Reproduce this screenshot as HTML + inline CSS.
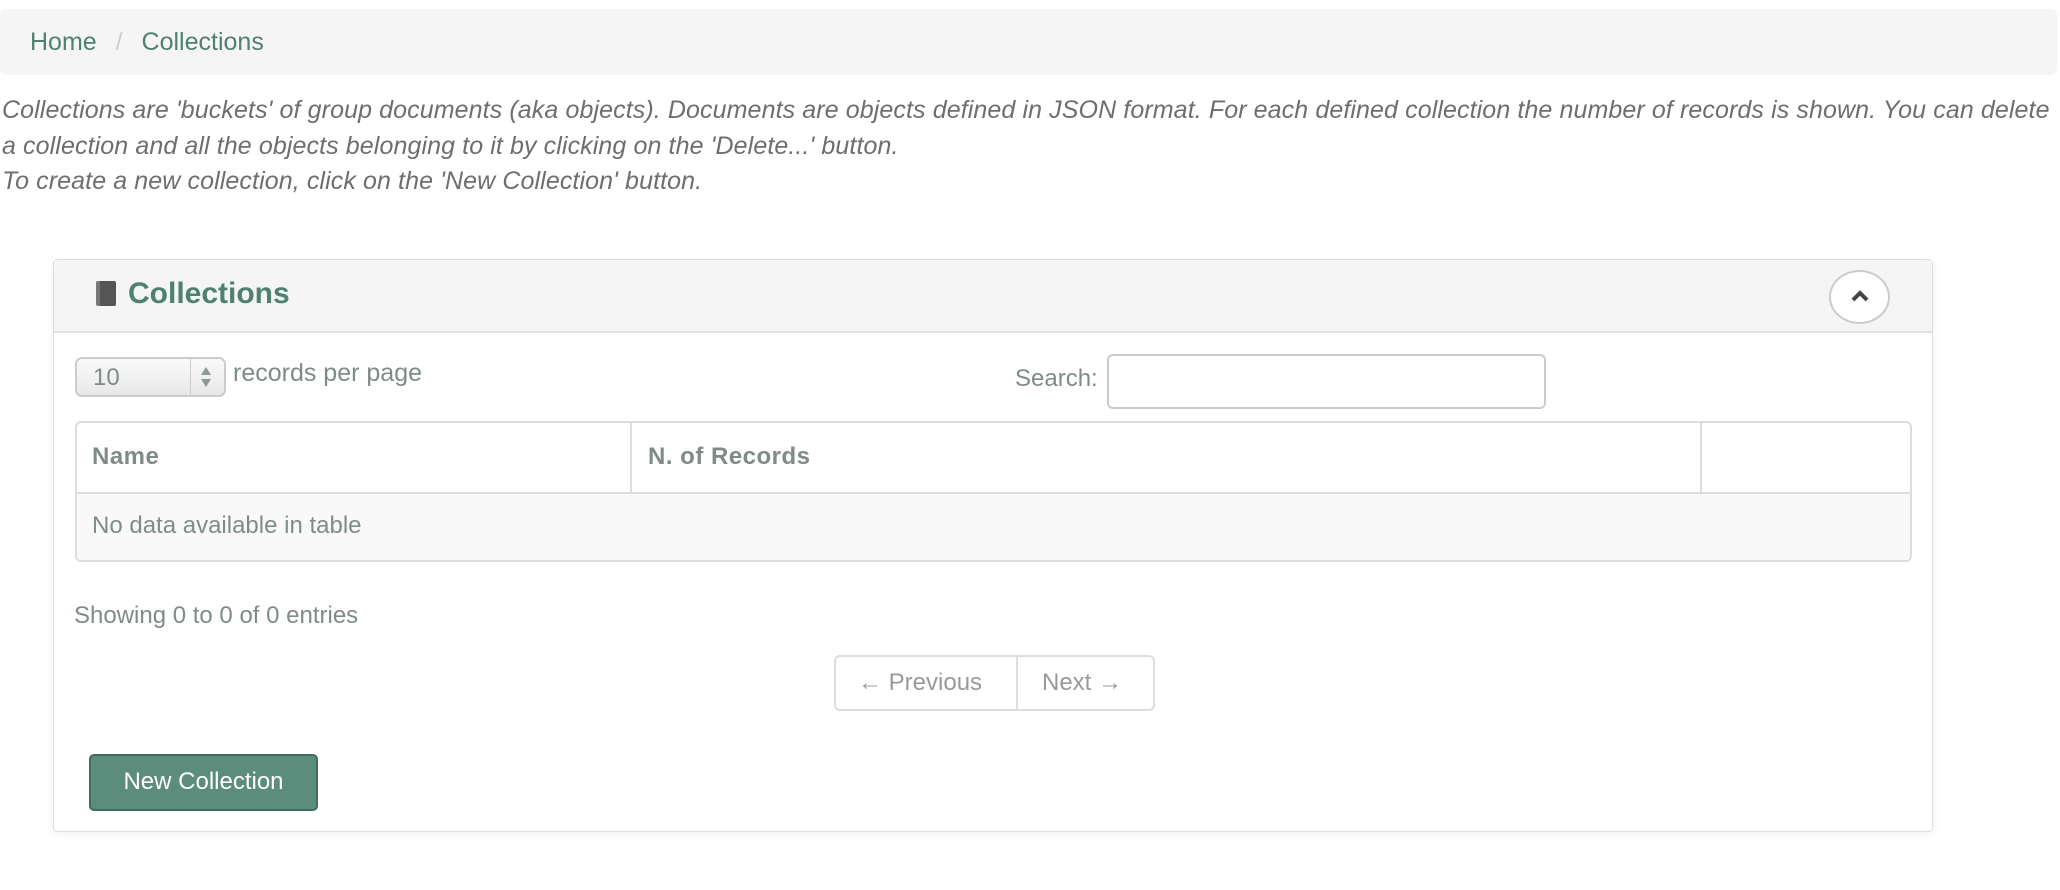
<!DOCTYPE html>
<html><head><meta charset="utf-8"><style>
*{box-sizing:border-box;margin:0;padding:0}
body{width:2060px;height:890px;background:#fff;font-family:"Liberation Sans",sans-serif;position:relative;overflow:hidden}
.a{position:absolute;white-space:nowrap}
.g{color:#4e8171}
.t{color:#7f8c86;font-size:24px}
</style></head><body>
<div class="a" style="left:0;top:9px;width:2057px;height:66px;background:#f5f5f5;border-radius:6px"></div>
<div class="a g" style="left:30px;top:28px;font-size:25px">Home <span style="color:#ccc;padding:0 12px">/</span> Collections</div>
<div class="a" style="left:2px;top:93px;font-size:25px;line-height:35.5px;font-style:italic;color:#6e6e6e;letter-spacing:0.1px">Collections are 'buckets' of group documents (aka objects). Documents are objects defined in JSON format. For each defined collection the number of records is shown. You can delete<br>a collection and all the objects belonging to it by clicking on the 'Delete...' button.<br>To create a new collection, click on the 'New Collection' button.</div>

<div class="a" style="left:53px;top:259px;width:1880px;height:573px;border:1px solid #ddd;border-radius:4px;box-shadow:0 2px 10px rgba(0,0,0,0.06)"></div>
<div class="a" style="left:54px;top:260px;width:1878px;height:73px;background:#f5f5f5;border-bottom:2px solid #e2e2e2"></div>
<div class="a" style="left:96px;top:281px;width:20px;height:25px;background:#555;border-radius:2px;border-left:4px solid #777"></div>
<div class="a g" style="left:128px;top:277px;font-size:30px;font-weight:bold">Collections</div>
<div class="a" style="left:1829px;top:270px;width:61px;height:54px;border:2px solid #ccc;border-radius:50%;background:#fff"></div>
<svg class="a" style="left:1850px;top:289px" width="20" height="14" viewBox="0 0 20 14"><path d="M3 11 L10 4 L17 11" fill="none" stroke="#444" stroke-width="4"/></svg>

<div class="a" style="left:75px;top:357px;width:151px;height:40px;border:2px solid #ccc;border-radius:7px;background:linear-gradient(#fafafa,#e8e8e8)"></div>
<div class="a" style="left:190px;top:359px;width:1px;height:36px;background:#ccc"></div>
<div class="a t" style="left:93px;top:364px">10</div>
<svg class="a" style="left:200px;top:366px" width="12" height="22"><path d="M6 1 L11 9 L1 9Z M6 21 L11 13 L1 13Z" fill="#8a9a92"/></svg>
<div class="a t" style="left:233px;top:359px;font-size:25px">records per page</div>
<div class="a t" style="left:1015px;top:365px">Search:</div>
<div class="a" style="left:1107px;top:354px;width:439px;height:55px;border:2px solid #ccc;border-radius:6px"></div>

<div class="a" style="left:75px;top:421px;width:1837px;height:141px;border:2px solid #ddd;border-radius:6px;overflow:hidden">
<div class="a" style="left:0;top:69px;width:1837px;height:70px;background:#f9f9f9;border-top:2px solid #ddd"></div>
<div class="a" style="left:553px;top:0;width:2px;height:69px;background:#ddd"></div>
<div class="a" style="left:1623px;top:0;width:2px;height:69px;background:#ddd"></div>
</div>
<div class="a t" style="left:92px;top:443px;font-weight:bold;letter-spacing:0.5px">Name</div>
<div class="a t" style="left:648px;top:443px;font-weight:bold;letter-spacing:0.5px">N. of Records</div>
<div class="a t" style="left:92px;top:512px">No data available in table</div>
<div class="a t" style="left:74px;top:602px">Showing 0 to 0 of 0 entries</div>

<div class="a" style="left:834px;top:655px;width:321px;height:56px;border:2px solid #ddd;border-radius:6px"></div>
<div class="a" style="left:1016px;top:657px;width:2px;height:52px;background:#ddd"></div>
<div class="a t" style="left:858px;top:669px;color:#999">← Previous</div>
<div class="a t" style="left:1042px;top:669px;color:#999">Next →</div>

<div class="a" style="left:89px;top:754px;width:229px;height:57px;background:#5b8c7c;border:2px solid #3f6e5f;border-radius:5px"></div>
<div class="a" style="left:89px;top:768px;width:229px;text-align:center;color:#fff;font-size:24px">New Collection</div>
</body></html>
